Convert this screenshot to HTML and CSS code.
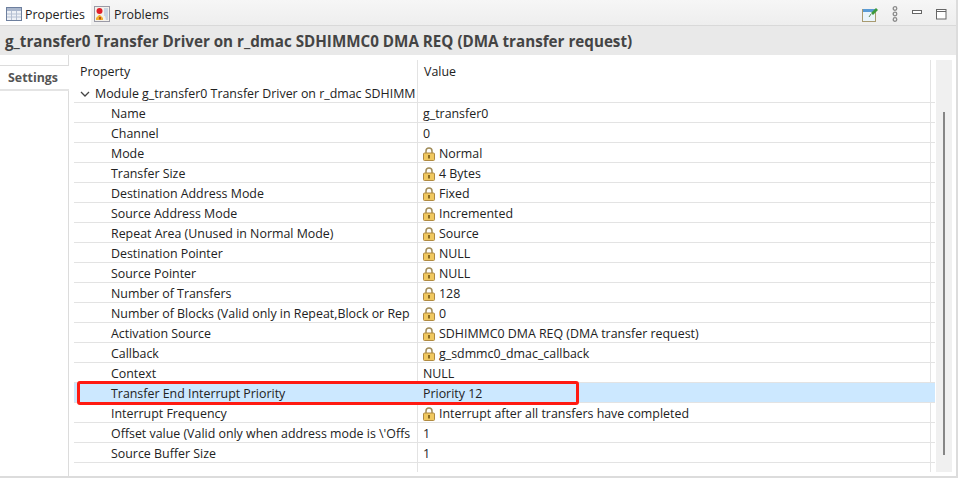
FILE: index.html
```html
<!DOCTYPE html>
<html lang="en">
<head>
  <meta charset="UTF-8" />
  <title>Properties</title>
  <link rel="stylesheet" href="styles.css">
</head>
<body>
  <div class="view">
    <!-- Tab bar -->
    <div class="tabbar">
      <div class="tab active">
        <svg class="tab-icon" width="16" height="16" viewBox="0 0 16 16">
          <rect x="0.500" y="1.500" width="15" height="13" fill="#eef1f6" stroke="#6d7f9e"/>
          <rect x="1" y="2" width="14" height="3" fill="#a9b6cc"/>
          <path d="M1 8h14M1 11h14M5.500 5v9M10.500 5v9" stroke="#b4bfd2" fill="none"/>
        </svg>
        <span>Properties</span>
      </div>
      <div class="tab">
        <svg class="tab-icon" width="16" height="16" viewBox="0 0 16 16">
          <rect x="0.500" y="0.500" width="15" height="15" fill="#f4f1ea" stroke="#9a9aa6"/>
          <path d="M10 2h4v12h-2l-1-4h-1z" fill="#c9d4e2"/>
          <circle cx="5.500" cy="5" r="3" fill="#e0202a"/>
          <path d="M2 14v-2l3-3h1l3 3v2z" fill="#f0b030"/>
          <rect x="5" y="11" width="2" height="2.500" fill="#c05010"/>
        </svg>
        <span>Problems</span>
      </div>
      <div class="toolbar">
        <svg width="16" height="16" viewBox="0 0 16 16">
          <rect x="0.500" y="3.500" width="13" height="12" fill="#eaf5fb" stroke="#a89a70"/>
          <rect x="1" y="3" width="13" height="3" fill="#5a9bd5"/>
          <path d="M9 7l5-5 2 2-5 5z" fill="#3d9a3d"/>
          <path d="M9 8l-2 3" stroke="#5c8a5c" fill="none"/>
        </svg>
        <svg width="6" height="16" viewBox="0 0 6 16">
          <g fill="none" stroke="#8a8a8a" stroke-width="1.300">
            <circle cx="3" cy="2.500" r="1.800"/>
            <circle cx="3" cy="8" r="1.800"/>
            <circle cx="3" cy="13.500" r="1.800"/>
          </g>
        </svg>
        <svg class="min-icon" width="10" height="5" viewBox="0 0 10 5">
          <rect x="0.500" y="0.500" width="9" height="3" fill="#fff" stroke="#666"/>
        </svg>
        <svg width="11" height="11" viewBox="0 0 11 11">
          <rect x="0.500" y="0.500" width="9.500" height="9.500" fill="#fff" stroke="#666"/>
          <path d="M0.500 2.500h9.500" stroke="#666" fill="none"/>
        </svg>
      </div>
    </div>

    <div class="title">g_transfer0 Transfer Driver on r_dmac SDHIMMC0 DMA REQ (DMA transfer request)</div>

    <div class="body">
      <!-- Left side tabs -->
      <div class="side">
        <div class="side-tab">Settings</div>
      </div>

      <!-- Property table -->
      <div class="table">
        <div class="rows">
          <div class="row head">
            <div class="cell name">Property</div>
            <div class="cell value">Value</div>
          </div>
          <div class="row module">
            <div class="cell name">
              <svg class="chevron" width="10" height="6" viewBox="0 0 10 6"><path d="M1 1l4 4 4-4" fill="none" stroke="#444" stroke-width="1.300"/></svg>
              <span>Module g_transfer0 Transfer Driver on r_dmac SDHIMM</span>
            </div>
            <div class="cell value"></div>
          </div>
          <div class="row"><div class="cell name">Name</div><div class="cell value">g_transfer0</div></div>
          <div class="row"><div class="cell name">Channel</div><div class="cell value">0</div></div>
          <div class="row"><div class="cell name">Mode</div><div class="cell value"><svg class="lock" viewBox="0 0 12 14"><use href="#lock"/></svg>Normal</div></div>
          <div class="row"><div class="cell name">Transfer Size</div><div class="cell value"><svg class="lock" viewBox="0 0 12 14"><use href="#lock"/></svg>4 Bytes</div></div>
          <div class="row"><div class="cell name">Destination Address Mode</div><div class="cell value"><svg class="lock" viewBox="0 0 12 14"><use href="#lock"/></svg>Fixed</div></div>
          <div class="row"><div class="cell name">Source Address Mode</div><div class="cell value"><svg class="lock" viewBox="0 0 12 14"><use href="#lock"/></svg>Incremented</div></div>
          <div class="row"><div class="cell name">Repeat Area (Unused in Normal Mode)</div><div class="cell value"><svg class="lock" viewBox="0 0 12 14"><use href="#lock"/></svg>Source</div></div>
          <div class="row"><div class="cell name">Destination Pointer</div><div class="cell value"><svg class="lock" viewBox="0 0 12 14"><use href="#lock"/></svg>NULL</div></div>
          <div class="row"><div class="cell name">Source Pointer</div><div class="cell value"><svg class="lock" viewBox="0 0 12 14"><use href="#lock"/></svg>NULL</div></div>
          <div class="row"><div class="cell name">Number of Transfers</div><div class="cell value"><svg class="lock" viewBox="0 0 12 14"><use href="#lock"/></svg>128</div></div>
          <div class="row"><div class="cell name">Number of Blocks (Valid only in Repeat,Block or Rep</div><div class="cell value"><svg class="lock" viewBox="0 0 12 14"><use href="#lock"/></svg>0</div></div>
          <div class="row"><div class="cell name">Activation Source</div><div class="cell value"><svg class="lock" viewBox="0 0 12 14"><use href="#lock"/></svg>SDHIMMC0 DMA REQ (DMA transfer request)</div></div>
          <div class="row"><div class="cell name">Callback</div><div class="cell value"><svg class="lock" viewBox="0 0 12 14"><use href="#lock"/></svg>g_sdmmc0_dmac_callback</div></div>
          <div class="row"><div class="cell name">Context</div><div class="cell value">NULL</div></div>
          <div class="row selected"><div class="cell name">Transfer End Interrupt Priority</div><div class="cell value">Priority 12</div></div>
          <div class="row"><div class="cell name">Interrupt Frequency</div><div class="cell value"><svg class="lock" viewBox="0 0 12 14"><use href="#lock"/></svg>Interrupt after all transfers have completed</div></div>
          <div class="row"><div class="cell name">Offset value (Valid only when address mode is \'Offs</div><div class="cell value">1</div></div>
          <div class="row"><div class="cell name">Source Buffer Size</div><div class="cell value">1</div></div>
          <div class="highlight"></div>
        </div>
        <div class="scrollbar"><div class="thumb"></div></div>
      </div>
    </div>
  </div>

  <!-- Shared lock icon -->
  <svg width="0" height="0" class="defs">
    <symbol id="lock" viewBox="0 0 12 14">
      <path d="M3 7V4a3 3 0 0 1 6 0v3" fill="none" stroke="#a08c58" stroke-width="1.500"/>
      <rect x="0.500" y="6" width="11" height="7.500" rx="1" fill="#f0c860" stroke="#b08a40"/>
      <rect x="5" y="8" width="2" height="3.500" fill="#8a6a20"/>
    </symbol>
  </svg>
</body>
</html>
```

FILE: styles.css
```css
* {
  box-sizing: border-box;
}

body {
  margin: 0;
  width: 958px;
  height: 478px;
  overflow: hidden;
  background: #fff;
  font-family: 'Open Sans', sans-serif;
  font-size: 12.4px;
  color: #222;
}

.view {
  display: flex;
  flex-direction: column;
  height: 100%;
  border-right: 2px solid #dcdcdc;
  border-bottom: 2px solid #dcdcdc;
}

.tabbar {
  display: flex;
  align-items: stretch;
  height: 26px;
  background: linear-gradient(#f6f6f6, #eeeeee);
  border-bottom: 1px solid #d9d9d9;
  flex-shrink: 0;
}

.tab {
  display: flex;
  align-items: center;
  gap: 4px;
  padding: 3px 3px 0 3px;
}

.tab.active {
  width: 91px;
  padding-left: 6px;
  background: #fff;
  gap: 3px;
}

.tab-icon {
  flex-shrink: 0;
}

.toolbar {
  margin-left: auto;
  display: flex;
  align-items: center;
  gap: 14px;
  padding-top: 3px;
  padding-right: 9px;
}

.min-icon {
  margin-bottom: 4px;
}

.title {
  height: 29px;
  flex-shrink: 0;
  padding-left: 5px;
  background: #e9e9e9;
  font-size: 15.2px;
  font-weight: 700;
  line-height: 30px;
  color: #444;
  white-space: nowrap;
}

.body {
  display: flex;
  flex: 1;
  min-height: 0;
}

.side {
  width: 69px;
  flex-shrink: 0;
  padding-top: 10px;
  border-right: 1px solid #dcdcdc;
}

.side-tab {
  height: 26px;
  margin-right: -1px;
  position: relative;
  padding-left: 8px;
  background: #fff;
  border-top: 1px solid #dcdcdc;
  border-bottom: 2px solid #e4e4e4;
  font-weight: 700;
  line-height: 23px;
  color: #555;
}

.table {
  flex: 1;
  display: flex;
  padding: 5px 4px 4px 5px;
  min-width: 0;
}

.rows {
  position: relative;
  width: 861px;
  background: linear-gradient(#e3e3e3, #e3e3e3) 343px 0 / 1px 100% no-repeat,
              linear-gradient(#e3e3e3, #e3e3e3) 856px 0 / 1px 100% no-repeat;
}

.row {
  display: flex;
  height: 20px;
  padding-top: 2px;
  border-bottom: 1px solid #e3e3e3;
  line-height: 17px;
}

.row.head {
  height: 23px;
  padding-top: 0;
  border-bottom: 0;
  line-height: 23px;
}

.row.selected {
  background: #cce8ff;
}

.cell {
  white-space: nowrap;
  overflow: hidden;
}

.cell.name {
  width: 343px;
  padding-left: 37px;
}

.head .cell.name {
  padding-left: 6px;
}

.module .cell.name {
  padding-left: 6px;
  display: flex;
  align-items: center;
  gap: 5px;
}

.cell.value {
  flex: 1;
  padding-left: 6px;
  display: flex;
  align-items: center;
}

.head .cell.value {
  padding-left: 7px;
}

.chevron {
  flex-shrink: 0;
}

.lock {
  width: 12px;
  height: 14px;
  margin-right: 4px;
  flex-shrink: 0;
}

.defs {
  position: absolute;
}

.highlight {
  position: absolute;
  left: 3px;
  top: 321px;
  width: 502px;
  height: 24px;
  border: 3px solid #ff1a12;
  border-radius: 3px;
}

.scrollbar {
  width: 16px;
  margin-left: 1px;
  background: #f0f0f0;
  display: flex;
  justify-content: center;
  padding-top: 52px;
  padding-bottom: 17px;
}

.thumb {
  width: 2px;
  height: 100%;
  background: #868686;
}
```
